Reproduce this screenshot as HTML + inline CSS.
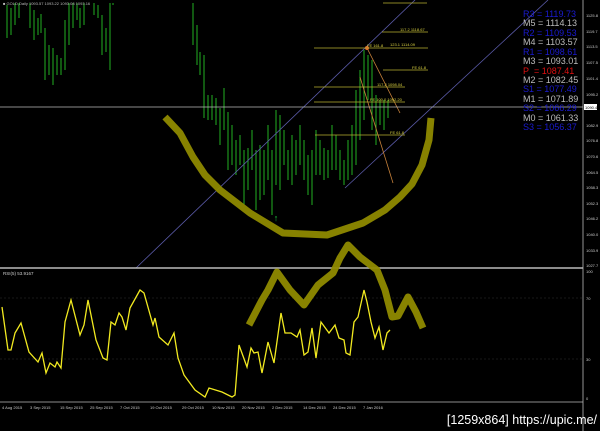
<!DOCTYPE html>
<html><head><meta charset="utf-8"><style>
html,body{margin:0;padding:0;background:#000;}
svg{display:block}
text{font-family:"Liberation Sans",sans-serif}
</style></head><body>
<svg width="600" height="431" viewBox="0 0 600 431" xmlns="http://www.w3.org/2000/svg">
<rect width="600" height="431" fill="#000"/>
<g stroke="#22b022" stroke-width="1">
<line x1="7" y1="5" x2="7" y2="38"/><line x1="11" y1="8" x2="11" y2="35"/><line x1="15" y1="3" x2="15" y2="25"/><line x1="19" y1="3" x2="19" y2="18"/><line x1="30" y1="3" x2="30" y2="28"/><line x1="34" y1="10" x2="34" y2="40"/><line x1="38" y1="18" x2="38" y2="35"/><line x1="41" y1="14" x2="41" y2="33"/><line x1="45" y1="28" x2="45" y2="80"/><line x1="49" y1="45" x2="49" y2="75"/><line x1="53" y1="48" x2="53" y2="85"/><line x1="57" y1="55" x2="57" y2="75"/><line x1="61" y1="58" x2="61" y2="75"/><line x1="65" y1="20" x2="65" y2="70"/><line x1="69" y1="3" x2="69" y2="45"/><line x1="73" y1="3" x2="73" y2="28"/><line x1="77" y1="3" x2="77" y2="20"/><line x1="80" y1="8" x2="80" y2="28"/><line x1="84" y1="3" x2="84" y2="25"/><line x1="94" y1="3" x2="94" y2="15"/><line x1="98" y1="5" x2="98" y2="18"/><line x1="102" y1="15" x2="102" y2="55"/><line x1="106" y1="28" x2="106" y2="52"/><line x1="110" y1="3" x2="110" y2="70"/><line x1="113" y1="3" x2="113" y2="5"/>
<line x1="193" y1="3" x2="193" y2="45"/><line x1="197" y1="25" x2="197" y2="65"/><line x1="200" y1="52" x2="200" y2="75"/><line x1="204" y1="55" x2="204" y2="118"/><line x1="208" y1="95" x2="208" y2="120"/><line x1="212" y1="95" x2="212" y2="120"/><line x1="216" y1="98" x2="216" y2="125"/><line x1="220" y1="108" x2="220" y2="145"/><line x1="224" y1="88" x2="224" y2="130"/><line x1="228" y1="112" x2="228" y2="170"/><line x1="232" y1="125" x2="232" y2="165"/><line x1="236" y1="140" x2="236" y2="175"/><line x1="240" y1="135" x2="240" y2="165"/><line x1="244" y1="150" x2="244" y2="205"/><line x1="248" y1="148" x2="248" y2="190"/><line x1="252" y1="130" x2="252" y2="170"/><line x1="256" y1="150" x2="256" y2="210"/><line x1="260" y1="145" x2="260" y2="200"/><line x1="264" y1="150" x2="264" y2="195"/><line x1="268" y1="125" x2="268" y2="180"/><line x1="272" y1="150" x2="272" y2="215"/><line x1="276" y1="110" x2="276" y2="185"/><line x1="280" y1="115" x2="280" y2="190"/><line x1="284" y1="130" x2="284" y2="165"/><line x1="288" y1="150" x2="288" y2="180"/><line x1="292" y1="135" x2="292" y2="185"/><line x1="296" y1="140" x2="296" y2="175"/><line x1="300" y1="125" x2="300" y2="165"/><line x1="304" y1="140" x2="304" y2="180"/><line x1="308" y1="155" x2="308" y2="195"/><line x1="312" y1="150" x2="312" y2="205"/><line x1="316" y1="130" x2="316" y2="175"/><line x1="320" y1="140" x2="320" y2="175"/><line x1="324" y1="148" x2="324" y2="180"/><line x1="328" y1="150" x2="328" y2="178"/><line x1="332" y1="125" x2="332" y2="170"/><line x1="336" y1="135" x2="336" y2="170"/><line x1="340" y1="150" x2="340" y2="180"/><line x1="344" y1="160" x2="344" y2="185"/><line x1="348" y1="140" x2="348" y2="180"/><line x1="352" y1="125" x2="352" y2="175"/><line x1="356" y1="90" x2="356" y2="165"/><line x1="360" y1="70" x2="360" y2="140"/><line x1="364" y1="50" x2="364" y2="120"/><line x1="368" y1="55" x2="368" y2="100"/><line x1="372" y1="60" x2="372" y2="130"/><line x1="376" y1="95" x2="376" y2="145"/><line x1="380" y1="100" x2="380" y2="125"/><line x1="384" y1="100" x2="384" y2="130"/><line x1="388" y1="100" x2="388" y2="118"/>
</g>
<text x="3" y="5" font-size="4" fill="#bbb">■ GOLD,Daily 1093.57 1093.22 1093.08 1093.16</text>
<g stroke="#5a5aa8" stroke-width="0.8">
<line x1="136" y1="268" x2="415" y2="0"/><line x1="345" y1="188" x2="548" y2="0"/>
</g>
<g stroke="#c8823a" stroke-width="0.8">
<line x1="367" y1="48" x2="400" y2="113"/><line x1="360" y1="77" x2="393" y2="183"/>
</g>
<circle cx="367" cy="48" r="2" fill="#e06a2a"/>
<g stroke="#b8b030" stroke-width="0.8">
<line x1="383" y1="3" x2="427" y2="3"/><line x1="382" y1="32" x2="428" y2="32"/><line x1="314" y1="48" x2="428" y2="48"/><line x1="383" y1="70" x2="428" y2="70"/><line x1="314" y1="87" x2="405" y2="87"/><line x1="314" y1="102" x2="405" y2="102"/><line x1="315" y1="135" x2="405" y2="135"/>
</g>
<g font-size="4" fill="#d8d040">
<text x="400" y="31">117.2 1118.67</text><text x="367" y="47">FE 161.8</text><text x="390" y="46">123.1 1114.09</text><text x="412" y="69">FE 61.8</text><text x="377" y="86">117.2 1098.04</text><text x="370" y="101">FE 100.0 1092.20</text><text x="390" y="134">FE 61.8</text>
</g>
<line x1="0" y1="107" x2="583" y2="107" stroke="#bbb" stroke-width="0.8"/>
<g font-size="9">
<text x="523" y="17" fill="#1a1ad0">R3 = 1119.73</text>
<text x="523" y="26" fill="#bbb">M5 = 1114.13</text>
<text x="523" y="36" fill="#1a1ad0">R2 = 1109.53</text>
<text x="523" y="45" fill="#bbb">M4 = 1103.57</text>
<text x="523" y="55" fill="#1a1ad0">R1 = 1098.61</text>
<text x="523" y="64" fill="#bbb">M3 = 1093.01</text>
<text x="523" y="74" fill="#e01010">P&#160; = 1087.41</text>
<text x="523" y="83" fill="#bbb">M2 = 1082.45</text>
<text x="523" y="92" fill="#1a1ad0">S1 = 1077.49</text>
<text x="523" y="102" fill="#bbb">M1 = 1071.89</text>
<text x="523" y="111" fill="#1a1ad0">S2 = 1066.29</text>
<text x="523" y="121" fill="#bbb">M0 = 1061.33</text>
<text x="523" y="130" fill="#1a1ad0">S3 = 1056.37</text>
</g>
<line x1="583" y1="0" x2="583" y2="431" stroke="#bbb" stroke-width="0.8"/>
<g font-size="4" fill="#ccc">
<text x="586" y="17">1125.8</text><text x="586" y="33">1119.7</text><text x="586" y="48">1113.5</text><text x="586" y="64">1107.5</text><text x="586" y="80">1101.4</text><text x="586" y="96">1095.2</text><text x="586" y="127">1082.9</text><text x="586" y="142">1076.8</text><text x="586" y="158">1070.6</text><text x="586" y="174">1064.5</text><text x="586" y="189">1058.3</text><text x="586" y="205">1052.3</text><text x="586" y="220">1046.2</text><text x="586" y="236">1040.0</text><text x="586" y="252">1033.9</text><text x="586" y="267">1027.7</text>
<text x="586" y="273">100</text><text x="586" y="300">70</text><text x="586" y="361">30</text><text x="586" y="400">0</text>
</g>
<rect x="584" y="104" width="13" height="6" fill="#fff"/>
<text x="585" y="109" font-size="4" fill="#000">1090.4</text>
<line x1="0" y1="268" x2="583" y2="268" stroke="#bbb" stroke-width="1.6"/>
<text x="3" y="275" font-size="4.5" fill="#ccc">RSI(5) 53.9167</text>
<line x1="0" y1="298" x2="583" y2="298" stroke="#333" stroke-width="0.6" stroke-dasharray="2,2"/>
<line x1="0" y1="359" x2="583" y2="359" stroke="#333" stroke-width="0.6" stroke-dasharray="2,2"/>
<line x1="0" y1="402" x2="583" y2="402" stroke="#bbb" stroke-width="0.8"/>
<polyline fill="none" stroke="#f2ea20" stroke-width="1.3" points="2,307 8,350 11,350 15,333 21,323 29,352 38,362 42,353 46,373 50,363 55,367 57,362 61,368 65,322 71,300 80,335 84,325 88,300 96,340 103,358 107,360 111,322 115,325 119,313 122,317 126,330 130,308 140,290 144,293 153,325 155,318 159,337 168,345 174,333 178,358 184,375 195,390 205,397 209,388 222,392 232,397 235,395 239,345 247,367 251,348 254,353 258,352 262,373 268,342 274,363 281,313 285,333 291,333 297,337 300,330 304,355 308,352 312,328 316,358 321,322 329,333 335,325 339,338 344,340 346,353 350,355 354,322 358,317 364,290 367,302 371,322 375,338 379,327 383,350 387,333 390,330"/>
<g font-size="4" fill="#ccc">
<text x="2" y="409">4 Aug 2015</text><text x="30" y="409">3 Sep 2015</text><text x="60" y="409">15 Sep 2015</text><text x="90" y="409">25 Sep 2015</text><text x="120" y="409">7 Oct 2015</text><text x="150" y="409">19 Oct 2015</text><text x="182" y="409">29 Oct 2015</text><text x="212" y="409">10 Nov 2015</text><text x="242" y="409">20 Nov 2015</text><text x="272" y="409">2 Dec 2015</text><text x="303" y="409">14 Dec 2015</text><text x="333" y="409">24 Dec 2015</text><text x="363" y="409">7 Jan 2016</text>
</g>
<g fill="none" stroke="#8f8a00" stroke-width="7" stroke-linejoin="round" opacity="0.95">
<polyline points="165,117 180,133 193,157 205,175 220,190 250,213 283,233 327,235 363,223 385,210 400,197 412,184 422,165 429,140 431,118"/>
<polyline points="249,325 262,300 268,290 277,272 290,290 304,305 318,285 333,273 340,258 348,245 360,257 377,270 385,290 392,317 398,316 408,297 416,312 423,328"/>
</g>
<text x="276" y="221" font-size="9" fill="#20d040" text-anchor="middle">↑</text>
<text x="597" y="424" font-size="12.5" fill="#fff" text-anchor="end">[1259x864] https://upic.me/</text>
</svg>
</body></html>
